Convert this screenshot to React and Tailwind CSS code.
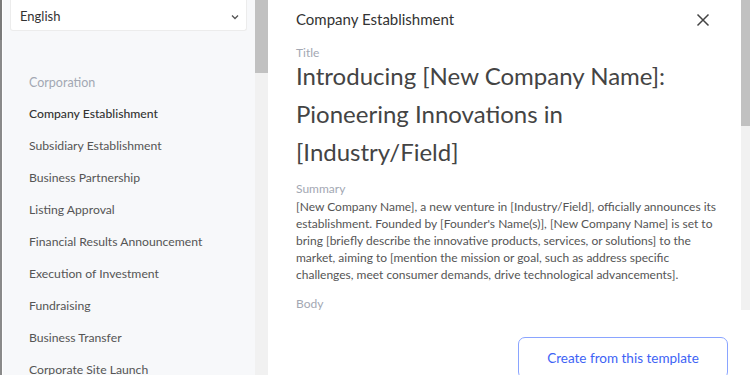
import React from "react";

const items = [
  "Company Establishment",
  "Subsidiary Establishment",
  "Business Partnership",
  "Listing Approval",
  "Financial Results Announcement",
  "Execution of Investment",
  "Fundraising",
  "Business Transfer",
  "Corporate Site Launch",
];

export default function App() {
  return (
    <div
      className="flex h-[375px] w-[750px] overflow-hidden bg-white"
      style={{ fontFamily: "Lato, 'Noto Sans', sans-serif" }}
    >
      {/* left edge strip */}
      <div className="flex w-[3px] shrink-0 flex-col">
        <div className="h-[40px] w-[2px] bg-[#7a7a7a]" />
        <div className="flex-1 w-[2px] bg-[#8a8a8a]" />
      </div>
      {/* sidebar */}
      <div className="flex w-[252px] shrink-0 flex-col overflow-hidden bg-[#f7f8fa]">
        <div className="ml-[7px] mr-[8px] flex h-[31px] shrink-0 items-center justify-between rounded-b-[3px] border border-t-0 border-[#ececec] bg-white pl-[9px] pr-[6px] pt-[3px]">
          <span className="text-[13px] text-[#333]">English</span>
          <svg width="10" height="10" viewBox="0 0 10 10" className="text-[#555]">
            <path d="M2 3.5 L5 6.5 L8 3.5" fill="none" stroke="currentColor" strokeWidth="1.3" />
          </svg>
        </div>
        <div className="mt-[43px] shrink-0 pl-[26px] text-[12.5px] text-[#a3a8b3]">Corporation</div>
        <div className="mt-[5px] flex shrink-0 flex-col pl-[26px]">
          {items.map((t, i) => (
            <div
              key={t}
              className={`flex h-[32px] shrink-0 items-center text-[12.2px] ${
                i === 0 ? "text-[#333] font-medium" : "text-[#555]"
              }`}
            >
              {t}
            </div>
          ))}
        </div>
      </div>
      {/* sidebar scrollbar */}
      <div className="flex w-[13px] shrink-0 flex-col bg-[#f1f1f1]">
        <div className="h-[73px] bg-[#c1c1c1]" />
      </div>
      {/* main panel */}
      <div className="flex flex-1 flex-col bg-white">
        <div className="flex h-[310px] shrink-0 overflow-hidden">
          <div className="flex-1 pl-[28px] pr-[22px]">
            <div className="flex h-[38px] items-center justify-between pr-[8px] pt-[1px]">
              <span className="text-[15px] text-[#333]">Company Establishment</span>
              <svg width="14" height="14" viewBox="0 0 14 14" className="mr-[1px] text-[#444]">
                <path d="M1.5 1.5 L12.5 12.5 M12.5 1.5 L1.5 12.5" stroke="currentColor" strokeWidth="1.5" />
              </svg>
            </div>
            <div className="mt-[6px] text-[12px] text-[#a3a8b3]">Title</div>
            <div className="mt-[-5px] text-[24px] leading-[38px] text-[#444]">
              Introducing [New Company Name]:
              <br />
              Pioneering Innovations in
              <br />
              [Industry/Field]
            </div>
            <div className="mt-[9px] text-[12px] text-[#a3a8b3]">Summary</div>
            <div className="text-[12px] leading-[17px] text-[#555]">
              [New Company Name], a new venture in [Industry/Field], officially announces its establishment. Founded by
              [Founder's Name(s)], [New Company Name] is set to bring [briefly describe the innovative products,
              services, or solutions] to the market, aiming to [mention the mission or goal, such as address specific
              challenges, meet consumer demands, drive technological advancements].
            </div>
            <div className="mt-[12px] text-[12px] text-[#a3a8b3]">Body</div>
          </div>
          <div className="flex w-[9px] shrink-0 flex-col bg-[#f1f1f1]">
            <div className="h-[126px] bg-[#c1c1c1]" />
          </div>
        </div>
        <div className="flex flex-1 justify-end bg-white pr-[22px] pt-[27px]">
          <button className="h-[42px] w-[210px] shrink-0 rounded-[7px] border border-[#8aa4ff] bg-white text-[13.5px] text-[#3d63f5]">
            Create from this template
          </button>
        </div>
      </div>
    </div>
  );
}
